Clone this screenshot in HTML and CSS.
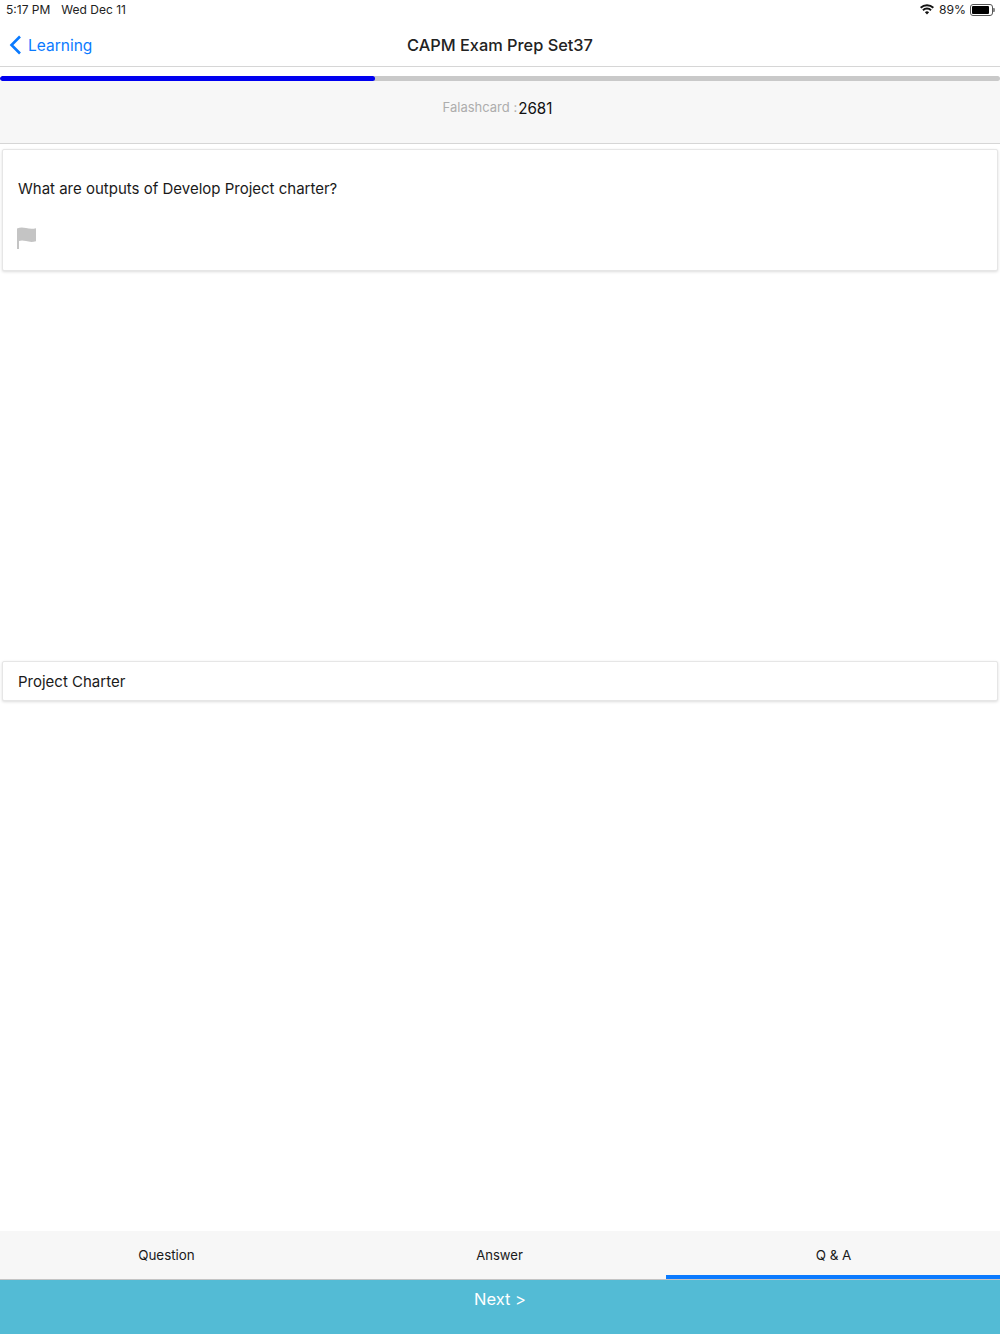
FILE: index.html
```html
<!DOCTYPE html>
<html lang="en">
<head>
<meta charset="utf-8">
<title>CAPM Exam Prep Set37</title>
<link rel="stylesheet" href="styles.css">
</head>
<body>
<div class="app">
  <header class="status">
    <div class="status-left"><span>5:17 PM</span><span>Wed Dec 11</span></div>
    <div class="status-right">
      <svg class="wifi" width="14" height="11" viewBox="0 0 14 11"><path d="M7 10.500 4.900 8.200a3 3 0 0 1 4.200 0zM3.600 6.900 2.300 5.500a6.800 6.800 0 0 1 9.400 0l-1.300 1.400a4.900 4.900 0 0 0-6.800 0zM1.300 4.400 0 3a10.200 10.200 0 0 1 14 0l-1.300 1.400a8.400 8.400 0 0 0-11.400 0z" fill="#111"/></svg>
      <span class="battery-pct">89%</span>
      <span class="battery"><span class="battery-fill"></span></span><span class="battery-tip"></span>
    </div>
  </header>
  <nav class="nav">
    <a class="back">
      <svg width="13" height="20" viewBox="0 0 13 20"><path d="M11 1.500 2.500 10l8.500 8.500" fill="none" stroke="#0a7aff" stroke-width="2.600"/></svg>
      <span>Learning</span>
    </a>
    <h1 class="title">CAPM Exam Prep Set37</h1>
  </nav>
  <div class="progress-wrap">
    <div class="progress"><div class="progress-fill"></div></div>
  </div>
  <section class="counter">
    <span class="counter-label">Falashcard :</span><span class="counter-value">2681</span>
  </section>
  <main class="content">
    <article class="card question">
      <p class="question-text">What are outputs of Develop Project charter?</p>
      <svg class="flag" width="20" height="22" viewBox="0 0 20 22"><path d="M0 1.500C3 0 6 .2 9 1s6 1.200 10 .3v13c-4 1-7 .6-10-.2s-5-.9-7 0V22H0z" fill="#c4c4c4"/></svg>
    </article>
    <article class="card answer">Project Charter</article>
  </main>
  <div class="tabs">
    <div class="tab">Question</div>
    <div class="tab tab-answer">Answer</div>
    <div class="tab tab-active">Q &amp; A</div>
  </div>
  <footer class="next">Next &gt;</footer>
</div>
</body>
</html>
```
FILE: styles.css
```css
* { box-sizing: border-box; }
html, body { margin: 0; padding: 0; }
body { background: #fff; font-family: Inter, "Liberation Sans", sans-serif; color: #111; }
.app { width: 1000px; height: 1334px; display: flex; flex-direction: column; overflow: hidden; }

.status { height: 20px; padding: 0 6px 1px; display: flex; justify-content: space-between; align-items: center; font-size: 12px; color: #222; }
.status-left { display: flex; gap: 11px; }
.status-right { display: flex; align-items: center; }
.wifi { margin-right: 5px; }
.battery-pct { font-size: 12.200px; }
.battery { width: 23px; height: 12px; border: 1px solid #555; border-radius: 3px; padding: 1px; margin-left: 4px; display: block; }
.battery-fill { display: block; width: 88%; height: 100%; background: #000; border-radius: 1px; }
.battery-tip { width: 2px; height: 4px; background: #888; border-radius: 0 1px 1px 0; margin-right: -1px; }

.nav { height: 47px; padding-top: 3px; position: relative; display: flex; align-items: center; justify-content: center; border-bottom: 1px solid #d6d6d6; }
.back { position: absolute; left: 9px; top: 15px; display: flex; align-items: center; gap: 6px; color: #0a7aff; font-size: 15.500px; }
.title { margin: 0; font-size: 16.350px; font-weight: 500; color: #222; }

.progress-wrap { height: 9px; padding-top: 9px; background: #fff; }
.progress { height: 5px; background: #c9c9c9; border-radius: 3px; overflow: hidden; }
.progress-fill { width: 375px; height: 100%; background: #0000f0; border-radius: 3px; }

.counter { height: 63px; margin-top: 5px; padding: 17px 5px 0 0; background: #f7f7f7; border-bottom: 1px solid #d6d6d6; display: flex; justify-content: center; align-items: flex-start; }
.counter-label { font-size: 13px; color: #adadad; line-height: 19px; }
.counter-value { font-size: 15.200px; color: #111; line-height: 21px; margin-left: 1px; }

.content { flex: 1; padding: 5px 2px 0; }
.card { background: #fff; border: 1px solid #e6e6e6; border-radius: 2px; box-shadow: 0 1px 3px rgba(0, 0, 0, .14); }
.question { height: 122px; padding: 29px 15px 0; }
.question-text { margin: 0 0 28px; font-size: 15px; line-height: 20px; color: #1a1a1a; }
.flag { display: block; margin-left: -1px; }
.answer { height: 40px; margin-top: 390px; padding: 0 15px; display: flex; align-items: center; font-size: 15px; color: #1a1a1a; }

.tabs { height: 49px; display: flex; background: #f7f7f7; border-bottom: 1px solid #c4c4c4; }
.tab { flex: 1; padding-top: 15px; text-align: center; font-size: 13.400px; line-height: 19px; color: #1a1a1a; }
.tab-answer { font-size: 13.100px; }
.tab-active { padding-left: 1px; border-bottom: 4px solid #0a7aff; }

.next { height: 54px; background: #53bbd5; color: #fff; text-align: center; font-size: 16.500px; line-height: 20px; padding-top: 9px; }
```
